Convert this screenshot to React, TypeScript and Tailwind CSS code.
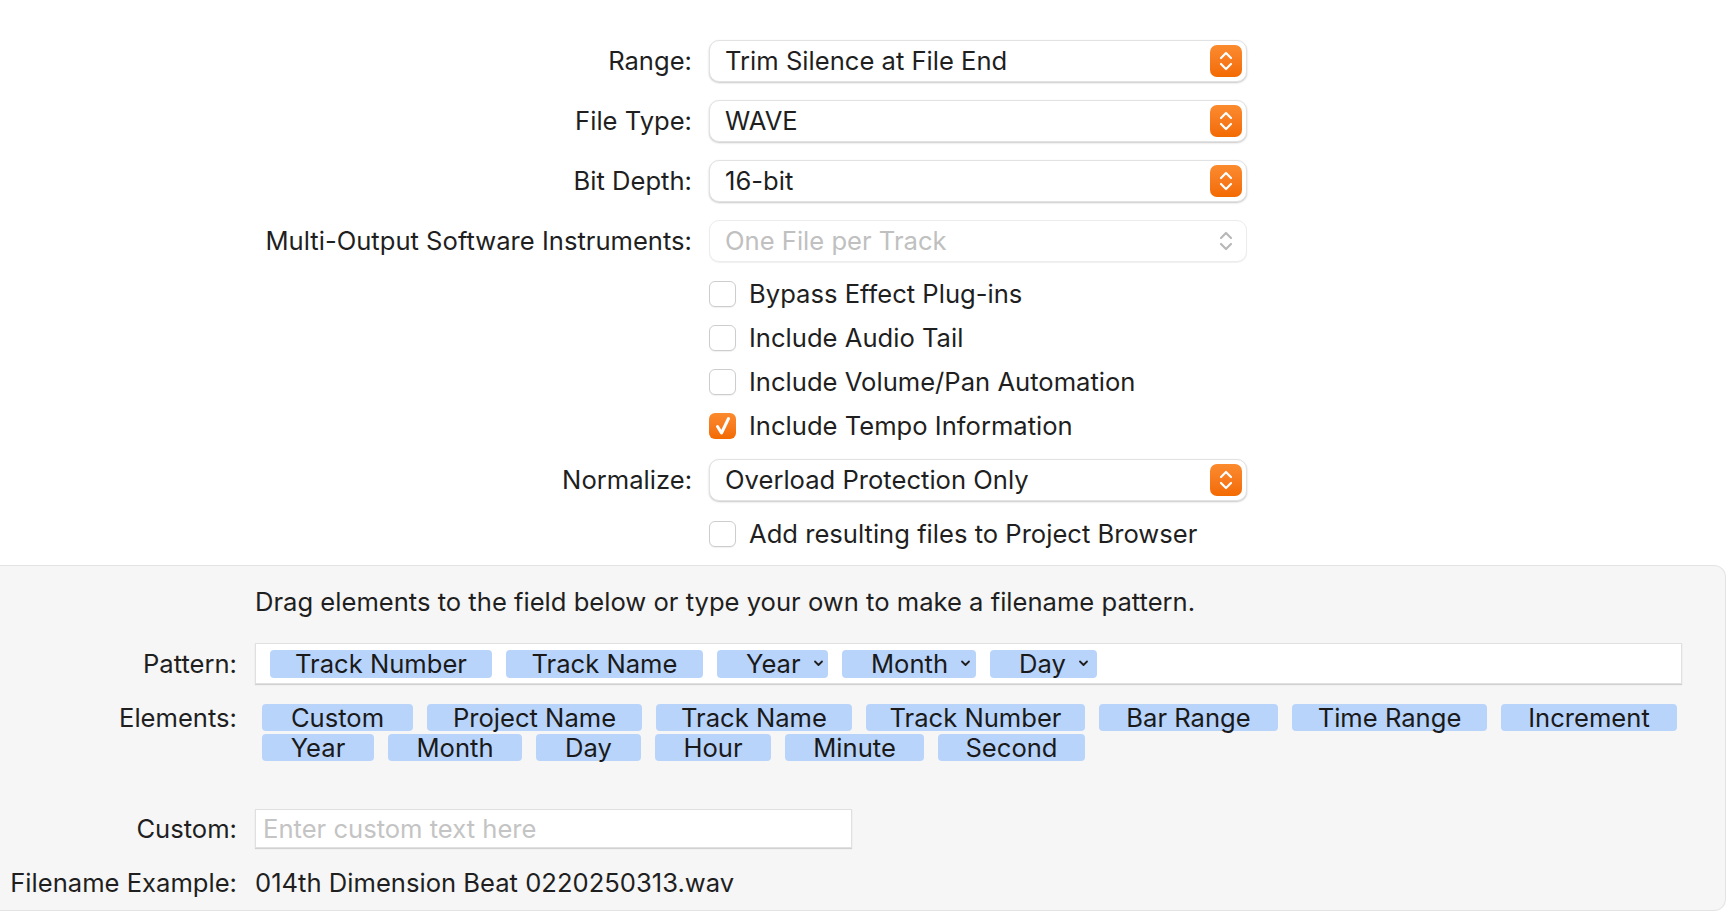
import React from 'react';

const FONT = { fontFamily: 'Inter, "Noto Sans", sans-serif' };

const Stepper = ({ disabled }: { disabled?: boolean }) => (
  <div
    className={
      disabled
        ? 'w-[32px] h-[32px] rounded-[7px] flex items-center justify-center'
        : 'w-[32px] h-[32px] rounded-[7px] flex items-center justify-center bg-gradient-to-b from-[#fb8b2e] to-[#f36a00]'
    }
  >
    <svg width="14" height="24" viewBox="0 0 14 24" fill="none">
      <path d="M2 9 L7 4 L12 9" stroke={disabled ? '#b8b8b8' : '#ffffff'} strokeWidth="2.2" strokeLinecap="round" strokeLinejoin="round" />
      <path d="M2 15 L7 20 L12 15" stroke={disabled ? '#b8b8b8' : '#ffffff'} strokeWidth="2.2" strokeLinecap="round" strokeLinejoin="round" />
    </svg>
  </div>
);

const Select = ({ value, disabled }: { value: string; disabled?: boolean }) => (
  <div
    className={
      disabled
        ? 'w-[538px] h-[42px] rounded-[10px] bg-white border border-[#ececec] shadow-[0_1px_1px_rgba(0,0,0,0.06)] flex items-center justify-between pl-[15px] pr-[4px]'
        : 'w-[538px] h-[42px] rounded-[10px] bg-white border border-[#e2e2e2] shadow-[0_1px_2px_rgba(0,0,0,0.22)] flex items-center justify-between pl-[15px] pr-[4px]'
    }
  >
    <span className={disabled ? 'text-[#c0c0c0]' : 'text-[#1f1f1f]'}>{value}</span>
    <Stepper disabled={disabled} />
  </div>
);

const Row = ({ label, children, className }: { label?: string; children: React.ReactNode; className?: string }) => (
  <div className={'flex items-center ' + (className ?? '')}>
    <div className="w-[692px] shrink-0 text-right text-[#1f1f1f] whitespace-nowrap">{label}</div>
    <div className="ml-[17px]">{children}</div>
  </div>
);

const Check = ({ label, checked }: { label: string; checked?: boolean }) => (
  <div className="h-[26px] flex items-center gap-[13px]">
    {checked ? (
      <div className="w-[27px] h-[26px] rounded-[6px] bg-gradient-to-b from-[#fb8b2e] to-[#f36a00] flex items-center justify-center">
        <svg width="20" height="22" viewBox="0 0 20 22" fill="none">
          <path d="M4.5 11.5 L8.5 18 L15.5 3.5" stroke="#ffffff" strokeWidth="3" strokeLinecap="round" strokeLinejoin="round" />
        </svg>
      </div>
    ) : (
      <div className="w-[27px] h-[26px] rounded-[6px] bg-white border border-[#cdcdcd] shadow-[0_1px_1px_rgba(0,0,0,0.06)]" />
    )}
    <span className="text-[#1f1f1f] whitespace-nowrap">{label}</span>
  </div>
);

const Chevron = () => (
  <svg width="11" height="7" viewBox="0 0 11 7" fill="none">
    <path d="M2 1.5 L5.5 5 L9 1.5" stroke="#1f1f1f" strokeWidth="1.8" strokeLinecap="round" strokeLinejoin="round" />
  </svg>
);

const PATTERN = [
  { label: 'Track Number', w: 'w-[222px]', menu: false },
  { label: 'Track Name', w: 'w-[197px]', menu: false },
  { label: 'Year', w: 'w-[111px]', menu: true },
  { label: 'Month', w: 'w-[134px]', menu: true },
  { label: 'Day', w: 'w-[107px]', menu: true },
];

const ELEMENTS_1 = [
  { label: 'Custom', w: 'w-[151px]' },
  { label: 'Project Name', w: 'w-[215px]' },
  { label: 'Track Name', w: 'w-[196px]' },
  { label: 'Track Number', w: 'w-[219px]' },
  { label: 'Bar Range', w: 'w-[179px]' },
  { label: 'Time Range', w: 'w-[195px]' },
  { label: 'Increment', w: 'w-[176px]' },
];

const ELEMENTS_2 = [
  { label: 'Year', w: 'w-[112px]' },
  { label: 'Month', w: 'w-[134px]' },
  { label: 'Day', w: 'w-[105px]' },
  { label: 'Hour', w: 'w-[116px]' },
  { label: 'Minute', w: 'w-[139px]' },
  { label: 'Second', w: 'w-[147px]' },
];

const Token = ({ label, w }: { label: string; w: string }) => (
  <div className={w + ' h-[27px] rounded-[4px] bg-[#b9d4fb] flex items-center justify-center text-[#1a1a1a] whitespace-nowrap'}>
    {label}
  </div>
);

const GrayRow = ({ label, children, className }: { label: string; children: React.ReactNode; className?: string }) => (
  <div className={'flex items-center ' + (className ?? '')}>
    <div className="w-[237px] shrink-0 flex justify-end text-[#1f1f1f] whitespace-nowrap">{label}</div>
    <div className="ml-[18px] flex-1">{children}</div>
  </div>
);

export default function App() {
  return (
    <div className="w-[1728px] h-[912px] bg-white overflow-hidden text-[25.6px] leading-[28px]" style={FONT}>
      <div className="flex flex-col gap-[18px] pt-[40px] pb-[18px]">
        <Row label="Range:">
          <Select value="Trim Silence at File End" />
        </Row>
        <Row label="File Type:">
          <Select value="WAVE" />
        </Row>
        <Row label="Bit Depth:">
          <Select value="16-bit" />
        </Row>
        <Row label="Multi-Output Software Instruments:">
          <Select value="One File per Track" disabled />
        </Row>
        <Row className="mt-[1px]">
          <Check label="Bypass Effect Plug-ins" />
        </Row>
        <Row>
          <Check label="Include Audio Tail" />
        </Row>
        <Row>
          <Check label="Include Volume/Pan Automation" />
        </Row>
        <Row>
          <Check label="Include Tempo Information" checked />
        </Row>
        <Row label="Normalize:" className="mt-[2px]">
          <Select value="Overload Protection Only" />
        </Row>
        <Row className="mt-[2px]">
          <Check label="Add resulting files to Project Browser" />
        </Row>
      </div>

      <div className="w-[1726px] h-[346px] bg-[#f6f6f6] border-t border-r border-b border-[#e3e3e3] rounded-r-[12px] pt-[22px]">
        <div className="pl-[255px] text-[#1f1f1f]">
          Drag elements to the field below or type your own to make a filename pattern.
        </div>

        <GrayRow label="Pattern:" className="mt-[27px]">
          <div className="w-[1427px] h-[41px] bg-white border border-[#e0e0e0] shadow-[0_1px_1px_rgba(0,0,0,0.15)] flex items-center gap-[14px] pl-[14px]">
            {PATTERN.map((t) =>
              t.menu ? (
                <div
                  key={t.label}
                  className={t.w + ' h-[28px] rounded-[4px] bg-[#b9d4fb] flex items-center pl-[29px] gap-[12px] text-[#1a1a1a] whitespace-nowrap'}
                >
                  {t.label}
                  <Chevron />
                </div>
              ) : (
                <div
                  key={t.label}
                  className={t.w + ' h-[28px] rounded-[4px] bg-[#b9d4fb] flex items-center justify-center text-[#1a1a1a] whitespace-nowrap'}
                >
                  {t.label}
                </div>
              )
            )}
          </div>
        </GrayRow>

        <div className="flex mt-[20px]">
          <div className="w-[237px] shrink-0 h-[27px] flex items-center justify-end text-[#1f1f1f]">Elements:</div>
          <div className="ml-[25px] flex flex-col gap-[3px]">
            <div className="flex gap-[14px]">
              {ELEMENTS_1.map((t) => (
                <Token key={t.label} label={t.label} w={t.w} />
              ))}
            </div>
            <div className="flex gap-[14px]">
              {ELEMENTS_2.map((t) => (
                <Token key={t.label} label={t.label} w={t.w} />
              ))}
            </div>
          </div>
        </div>

        <GrayRow label="Custom:" className="mt-[48px]">
          <div className="w-[597px] h-[39px] bg-white border border-[#e0e0e0] shadow-[0_1px_1px_rgba(0,0,0,0.15)] flex items-center pl-[7px] text-[#c4c4c4]">
            Enter custom text here
          </div>
        </GrayRow>

        <GrayRow label="Filename Example:" className="mt-[21px]">
          <div className="text-[#1f1f1f]">014th Dimension Beat 0220250313.wav</div>
        </GrayRow>
      </div>
    </div>
  );
}
